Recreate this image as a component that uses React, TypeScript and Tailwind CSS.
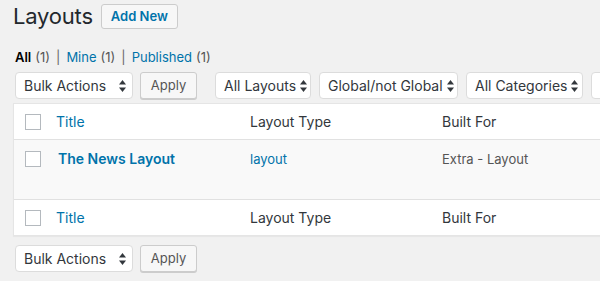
import React from 'react'

const font = { fontFamily: 'Inter, "Noto Sans", sans-serif' }

function Arrows() {
  return (
    <svg width="7" height="12" viewBox="0 0 7 12" className="shrink-0">
      <path d="M3.5 0 L7 4.5 L0 4.5 Z" fill="#32373c" />
      <path d="M0 7.5 L7 7.5 L3.5 12 Z" fill="#32373c" />
    </svg>
  )
}

function Select({ label, width }: { label?: string; width: string }) {
  return (
    <div
      className={`flex h-[27px] ${width} shrink-0 items-center justify-between gap-[4px] rounded-[4px] border border-[#dcdcdc] bg-white pl-[8px] pr-[6px] text-[14px] text-[#32373c]`}
    >
      <span className="whitespace-nowrap">{label}</span>
      <Arrows />
    </div>
  )
}

function ApplyButton() {
  return (
    <div className="flex h-[27px] w-[57px] shrink-0 items-center justify-center rounded-[3px] border border-[#cccccc] bg-[#f7f7f7] text-[13px] text-[#555] shadow-[0_1px_0_#cccccc]">
      Apply
    </div>
  )
}

function Checkbox() {
  return <div className="h-[16px] w-[16px] border border-[#b4b9be] bg-white" />
}

function HeaderRow({ bottom }: { bottom?: boolean }) {
  return (
    <div
      className={`grid h-[36px] grid-cols-[42px_194px_192px_192px_1fr] items-center text-[14px] ${
        bottom ? 'border-t border-[#e1e1e1]' : 'border-b border-[#e1e1e1]'
      }`}
    >
      <div className="pl-[11px]">
        <Checkbox />
      </div>
      <div className="text-[#0073aa]">Title</div>
      <div className="text-[#32373c]">Layout Type</div>
      <div className="text-[#32373c]">Built For</div>
      <div />
    </div>
  )
}

export default function App() {
  return (
    <div
      className="h-[281px] w-[600px] overflow-hidden bg-[#f1f1f1] pl-[13px]"
      style={font}
    >
      <div className="flex items-center gap-[8px] pt-[4px]">
        <h1 className="text-[22px] font-normal leading-[25px] tracking-[-0.2px] text-[#23282d]">
          Layouts
        </h1>
        <div className="flex h-[25px] items-center rounded-[3px] border border-[#cccccc] bg-[#f7f7f7] px-[9px] text-[13px] font-semibold text-[#0073aa]">
          Add New
        </div>
      </div>

      <div className="mt-[20px] flex items-center pl-[2px] text-[13px] leading-[16px] text-[#555]">
        <span className="font-semibold text-[#000]">All</span>
        <span className="ml-[4px]">(1)</span>
        <span className="mx-[6px] text-[#666]">|</span>
        <span className="text-[#0073aa]">Mine</span>
        <span className="ml-[4px]">(1)</span>
        <span className="mx-[6px] text-[#666]">|</span>
        <span className="text-[#0073aa]">Published</span>
        <span className="ml-[4px]">(1)</span>
      </div>

      <div className="mt-[7px] flex items-center gap-[8px] pl-[2px]">
        <div className="flex items-center gap-[7px]">
          <Select label="Bulk Actions" width="w-[118px]" />
          <ApplyButton />
        </div>
        <div className="ml-[10px]">
          <Select label="All Layouts" width="w-[96px]" />
        </div>
        <Select label="Global/not Global" width="w-[139px]" />
        <Select label="All Categories" width="w-[117px]" />
        <Select width="w-[100px]" />
      </div>

      <div className="mt-[4px] w-[700px] border border-[#e5e5e5] bg-white shadow-[0_1px_1px_rgba(0,0,0,0.04)]">
        <HeaderRow />
        <div className="grid h-[59px] grid-cols-[42px_194px_192px_192px_1fr] items-start bg-[#f9f9f9] pt-[11px]">
          <div className="pl-[11px]">
            <Checkbox />
          </div>
          <div className="pl-[2px] text-[14px] font-semibold leading-[16px] text-[#0073aa]">
            The News Layout
          </div>
          <div className="text-[13px] leading-[16px] text-[#0073aa]">layout</div>
          <div className="text-[13px] leading-[16px] text-[#555]">
            Extra - Layout
          </div>
          <div />
        </div>
        <HeaderRow bottom />
      </div>

      <div className="mt-[9px] flex items-center gap-[7px] pl-[2px]">
        <Select label="Bulk Actions" width="w-[118px]" />
        <ApplyButton />
      </div>
    </div>
  )
}
